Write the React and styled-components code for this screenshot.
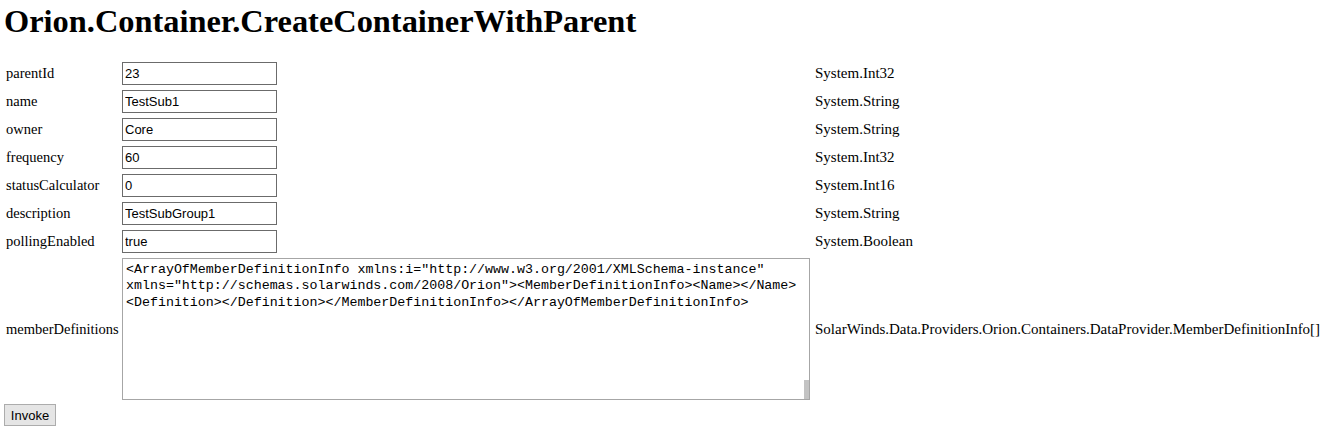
import React from "react"
import styled, { createGlobalStyle } from "styled-components"

const GlobalStyle = createGlobalStyle`
  html, body {
    margin: 0;
    padding: 0;
    background: #ffffff;
  }
  body {
    font-family: "Liberation Serif", "Times New Roman", serif;
    color: #000;
  }
`

const params = [
  { name: "parentId", value: "23", type: "System.Int32" },
  { name: "name", value: "TestSub1", type: "System.String" },
  { name: "owner", value: "Core", type: "System.String" },
  { name: "frequency", value: "60", type: "System.Int32" },
  { name: "statusCalculator", value: "0", type: "System.Int16" },
  { name: "description", value: "TestSubGroup1", type: "System.String" },
  { name: "pollingEnabled", value: "true", type: "System.Boolean" },
]

const memberXml =
  '<ArrayOfMemberDefinitionInfo xmlns:i="http://www.w3.org/2001/XMLSchema-instance"\n' +
  'xmlns="http://schemas.solarwinds.com/2008/Orion"><MemberDefinitionInfo><Name></Name>\n' +
  "<Definition></Definition></MemberDefinitionInfo></ArrayOfMemberDefinitionInfo>"

const App = () => {
  return (
    <Page>
      <GlobalStyle />
      <Title>Orion.Container.CreateContainerWithParent</Title>
      <ParamGrid>
        {params.map(p => (
          <React.Fragment key={p.name}>
            <Label>{p.name}</Label>
            <Cell>
              <TextBox type="text" defaultValue={p.value} />
            </Cell>
            <TypeName>{p.type}</TypeName>
          </React.Fragment>
        ))}
        <Label>memberDefinitions</Label>
        <Cell>
          <AreaWrap>
            <XmlArea defaultValue={memberXml} spellCheck={false} />
            <ScrollThumb />
          </AreaWrap>
        </Cell>
        <TypeName>SolarWinds.Data.Providers.Orion.Containers.DataProvider.MemberDefinitionInfo[]</TypeName>
      </ParamGrid>
      <InvokeButton>Invoke</InvokeButton>
    </Page>
  )
}

const Page = styled.div`
  padding: 3px 0 0 4px;
`

const Title = styled.h1`
  margin: 0 0 22px 0;
  font-family: "Liberation Serif", "Times New Roman", serif;
  font-size: 32.4px;
  font-weight: bold;
  line-height: 37px;
`

const ParamGrid = styled.div`
  display: grid;
  grid-template-columns: 118px 693px auto;
  grid-template-rows: repeat(7, 23px) 142px;
  row-gap: 5px;
  align-items: center;
`

const Label = styled.div`
  padding-left: 2px;
  font-size: 14.5px;
  white-space: nowrap;
`

const Cell = styled.div`
  display: flex;
  align-items: center;
`

const TypeName = styled.div`
  font-size: 15px;
  white-space: nowrap;
`

const TextBox = styled.input`
  box-sizing: border-box;
  width: 155px;
  height: 23px;
  margin: 0;
  padding: 1px 2px;
  border: 1px solid #6b6b6b;
  border-radius: 0;
  font-family: "Liberation Sans", Arial, sans-serif;
  font-size: 13px;
  color: #000;
  outline: none;
`

const AreaWrap = styled.div`
  position: relative;
  width: 688px;
  height: 142px;
  margin-top: -1px;
`

const XmlArea = styled.textarea`
  box-sizing: border-box;
  display: block;
  width: 688px;
  height: 142px;
  margin: 0;
  padding: 3px 3px;
  border: 1px solid #a6a6a6;
  border-radius: 0;
  resize: none;
  overflow: hidden;
  white-space: pre;
  font-family: "Liberation Mono", "Courier New", monospace;
  font-size: 13.3px;
  line-height: 16.5px;
  color: #000;
  outline: none;
`

const ScrollThumb = styled.div`
  position: absolute;
  right: 1px;
  bottom: 1px;
  width: 5px;
  height: 19px;
  background: #c3c3c3;
`

const InvokeButton = styled.button`
  display: block;
  box-sizing: border-box;
  margin: 4px 0 0 0;
  width: 52px;
  height: 22px;
  padding: 0;
  border: 1px solid #acacac;
  border-radius: 0;
  background: #e5e5e5;
  font-family: "Liberation Sans", Arial, sans-serif;
  font-size: 13px;
  color: #000;
`

export default App
